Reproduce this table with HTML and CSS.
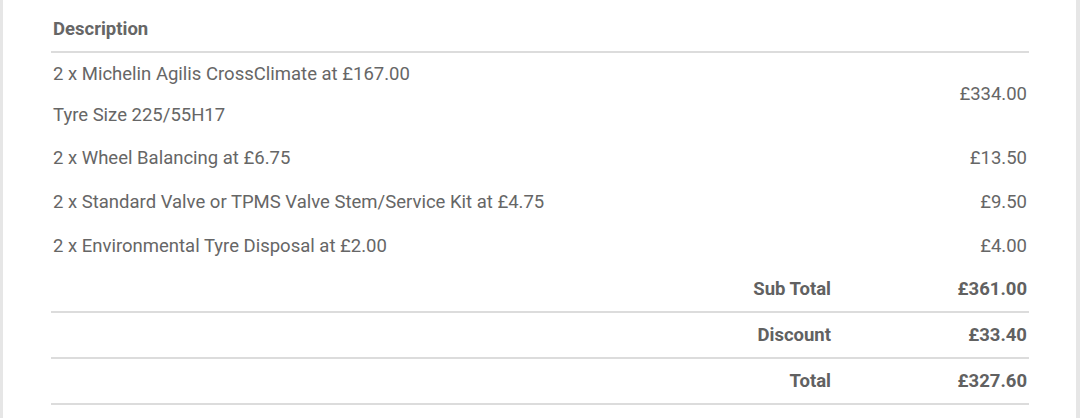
FILE: index.html
```html
<!DOCTYPE html>
<html>
<head>
<meta charset="utf-8">
<link rel="stylesheet" href="styles.css">
</head>
<body>
<div class="panel">
  <table class="invoice">
    <thead>
      <tr><th class="desc-head">Description</th><th class="amt-head"></th></tr>
    </thead>
    <tbody>
      <tr class="multi">
        <td class="desc"><div class="line first">2 x Michelin Agilis CrossClimate at £167.00</div><div class="line">Tyre Size 225/55H17</div></td>
        <td class="amt">£334.00</td>
      </tr>
      <tr class="item"><td class="desc">2 x Wheel Balancing at £6.75</td><td class="amt">£13.50</td></tr>
      <tr class="item"><td class="desc">2 x Standard Valve or TPMS Valve Stem/Service Kit at £4.75</td><td class="amt">£9.50</td></tr>
      <tr class="item"><td class="desc">2 x Environmental Tyre Disposal at £2.00</td><td class="amt">£4.00</td></tr>
      <tr class="total"><td class="label">Sub Total</td><td class="amt">£361.00</td></tr>
      <tr class="total"><td class="label">Discount</td><td class="amt">£33.40</td></tr>
      <tr class="total"><td class="label">Total</td><td class="amt">£327.60</td></tr>
    </tbody>
  </table>
</div>
</body>
</html>
```
FILE: styles.css
```css
html, body {
  margin: 0;
  padding: 0;
  background: #e6e6e6;
  height: 100%;
}
body {
  font-family: Roboto, "Liberation Sans", sans-serif;
  font-size: 18.5px;
  color: #666666;
}
.panel {
  background: #ffffff;
  margin: 0 4px 0 3px;
  padding: 6px 47px 20px 48px;
  min-height: 100%;
  box-sizing: border-box;
}
.invoice {
  width: 100%;
  border-collapse: collapse;
}
.invoice th, .invoice td {
  padding: 10px 2px;
  line-height: 24px;
  vertical-align: middle;
}
.invoice th {
  font-weight: 700;
  text-align: left;
  padding-top: 11px;
  padding-bottom: 10px;
  border-bottom: 2px solid #dcdcdc;
}
.amt-head { width: 192px; }
.amt { text-align: right; }
.multi td.desc {
  padding-top: 9px;
  padding-bottom: 8px;
}
.item td {
  padding-top: 11px;
  padding-bottom: 9px;
}
.line.first { margin-bottom: 17px; }
.total td {
  font-weight: 700;
  color: #616161;
  border-bottom: 2px solid #dcdcdc;
}
.total td.label { text-align: right; }
```
